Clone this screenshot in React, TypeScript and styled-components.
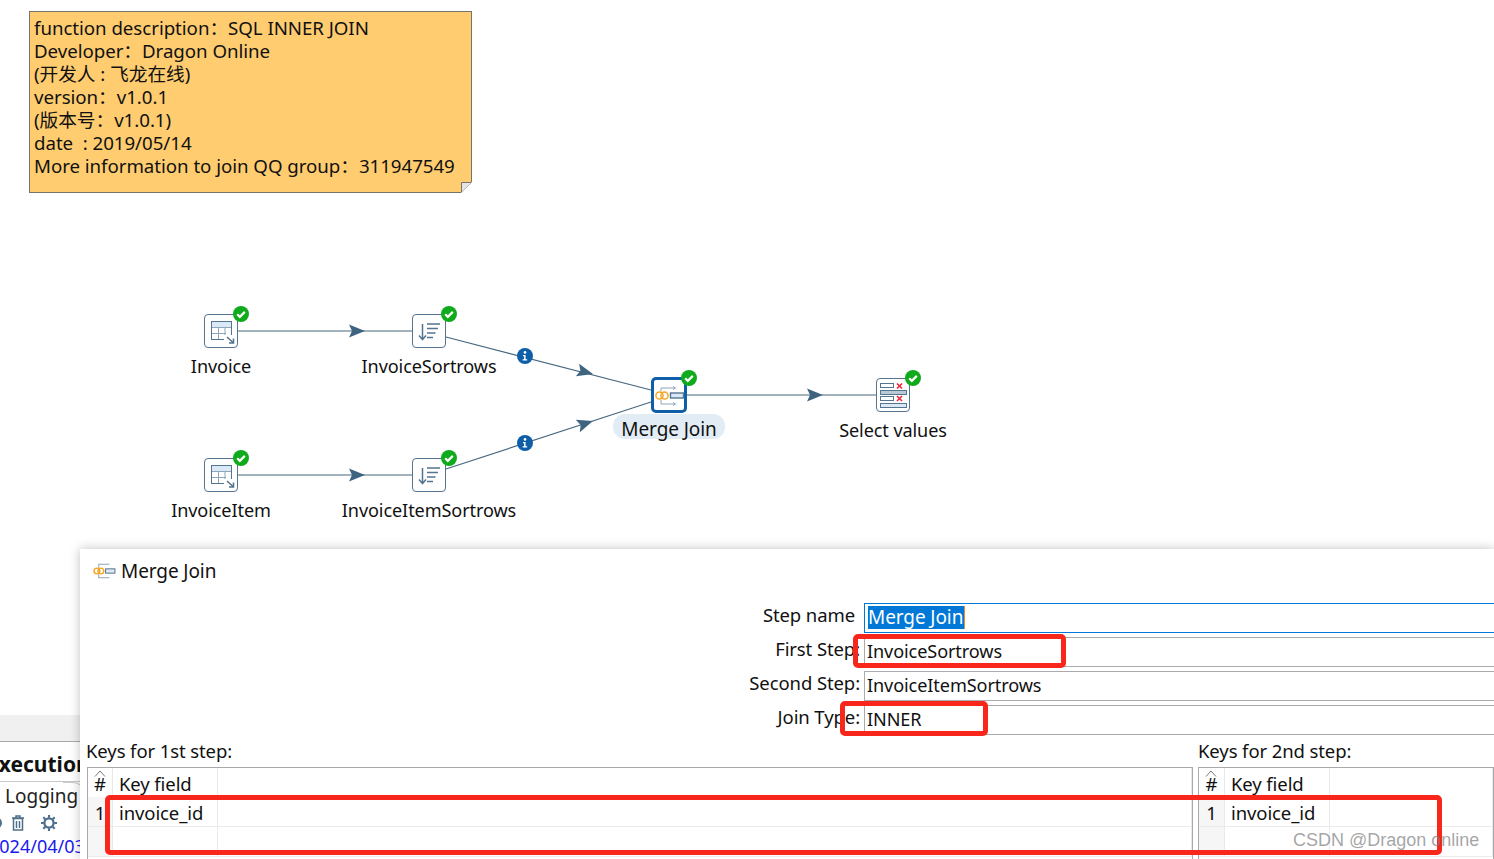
import React from "react";
import styled, { createGlobalStyle } from "styled-components";

const GlobalStyle = createGlobalStyle`
  html, body {
    margin: 0;
    background: #fff;
    overflow: hidden;
  }
  body {
    font-family: "Noto Sans", "Noto Sans CJK SC", sans-serif;
    color: #111;
  }
`;

const Page = styled.div`
  position: relative;
  width: 1494px;
  height: 859px;
  overflow: hidden;
  display: flex;
  flex-direction: column;
`;

/* ---------- canvas ---------- */

const Canvas = styled.div`
  position: relative;
  height: 549px;
  flex: none;
`;

const Note = styled.div`
  position: absolute;
  left: 29px;
  top: 11px;
  width: 443px;
  height: 182px;
  box-sizing: border-box;
  padding: 4px 0 0 4px;
  background: #ffcc70;
  border: 1px solid #77736b;
  font-size: 18.7px;
  line-height: 23px;
  letter-spacing: -0.04px;
  white-space: pre;
`;

const NoteFold = styled.svg`
  position: absolute;
  right: -1px;
  bottom: -1px;
  width: 11px;
  height: 11px;
`;

const Hops = styled.svg`
  position: absolute;
  inset: 0;
  width: 1494px;
  height: 549px;
`;

const Node = styled.div<{ $x: number; $y: number }>`
  position: absolute;
  left: ${(p) => p.$x}px;
  top: ${(p) => p.$y}px;
  width: 0;
  display: flex;
  flex-direction: column;
  align-items: center;
`;

const IconBox = styled.div<{ $active?: boolean }>`
  position: relative;
  flex: none;
  box-sizing: border-box;
  width: ${(p) => (p.$active ? 36 : 34)}px;
  height: ${(p) => (p.$active ? 36 : 34)}px;
  background: #fff;
  border: ${(p) => (p.$active ? "3px solid #0f5ea8" : "1px solid #55748f")};
  border-radius: ${(p) => (p.$active ? 5 : 4)}px;
  svg.glyph {
    position: absolute;
    left: ${(p) => (p.$active ? -1 : 0)}px;
    top: ${(p) => (p.$active ? -1 : 0)}px;
    width: 32px;
    height: 32px;
  }
`;

const Badge = styled.svg<{ $active?: boolean }>`
  position: absolute;
  right: ${(p) => (p.$active ? -13 : -12)}px;
  top: ${(p) => (p.$active ? -10 : -9)}px;
  width: 16px;
  height: 16px;
`;

const NodeLabel = styled.div<{ $active?: boolean }>`
  flex: none;
  margin-top: ${(p) => (p.$active ? 1 : 6)}px;
  padding: ${(p) => (p.$active ? "0 8px" : 0)};
  height: 25px;
  line-height: ${(p) => (p.$active ? 31 : 25)}px;
  border-radius: 12px;
  background: ${(p) => (p.$active ? "#e1ecf5" : "transparent")};
  font-size: ${(p) => (p.$active ? 19 : 18.1)}px;
  letter-spacing: -0.1px;
  white-space: nowrap;
`;

/* ---------- lower band ---------- */

const Lower = styled.div`
  flex: 1;
  display: flex;
  min-height: 0;
`;

const Behind = styled.div`
  flex: none;
  width: 80px;
  overflow: hidden;
  padding-top: 166px;
  white-space: nowrap;
`;

const BehindBar = styled.div`
  height: 26px;
  background: #f0f0f0;
  border-bottom: 1px solid #a9a9a9;
`;

const BehindTitle = styled.div`
  height: 39px;
  line-height: 44px;
  margin-left: -13px;
  font-size: 21px;
  font-weight: 700;
  border-bottom: 1px solid #c9c9c9;
`;

const BehindTab = styled.div`
  position: relative;
  height: 29px;
  line-height: 29px;
  padding-left: 5px;
  font-size: 19px;
  color: #222;
  &::after {
    content: "";
    position: absolute;
    right: -8px;
    top: 0;
    width: 24px;
    height: 20px;
    border-top: 1px solid #c9c9c9;
    border-right: 1px solid #c9c9c9;
    border-top-right-radius: 16px;
  }
`;

const BehindTools = styled.div`
  height: 24px;
  display: flex;
  align-items: center;
  gap: 8px;
  margin-left: -11px;
  color: #4d6f8c;
`;

const GearIcon = styled.svg`
  margin-left: 8px;
`;

const BehindDate = styled.div`
  margin-left: -11px;
  line-height: 22px;
  font-size: 18px;
  color: #1a1aee;
`;

const Dialog = styled.div`
  position: relative;
  flex: 1;
  min-width: 0;
  background: #fff;
  box-shadow: 0 0 10px rgba(0, 0, 0, 0.25);
  padding: 0 0 0 6px;
  overflow: visible;
`;

const TitleRow = styled.div`
  height: 43px;
  display: flex;
  align-items: center;
  gap: 5px;
  padding-left: 7px;
  font-size: 19px;
  letter-spacing: -0.1px;
`;

const Form = styled.div`
  margin-top: 11px;
  display: grid;
  grid-template-columns: 774px 1fr;
  column-gap: 4px;
  row-gap: 4px;
  font-size: 18.5px;
  letter-spacing: -0.1px;
`;

const FieldLabel = styled.div<{ $inset?: boolean }>`
  height: 30px;
  line-height: ${(p) => (p.$inset ? 23 : 24)}px;
  text-align: right;
  padding-right: ${(p) => (p.$inset ? 5 : 0)}px;
`;

const Field = styled.div<{ $focus?: boolean }>`
  box-sizing: border-box;
  height: 30px;
  line-height: 26px;
  font-size: 18.1px;
  padding-left: ${(p) => (p.$focus ? 3 : 2)}px;
  border: 1px solid ${(p) => (p.$focus ? "#0078d7" : "#ababab")};
  border-right: none;
`;

const Selected = styled.span`
  display: inline-block;
  height: 23px;
  line-height: 23px;
  margin-top: 2px;
  padding-right: 1px;
  font-size: 19px;
  background: #0078d7;
  border-right: 1px solid #f08a24;
  color: #fff;
  vertical-align: top;
`;

const Keys = styled.div`
  margin-top: 4px;
  display: grid;
  grid-template-columns: 1107px 1fr;
  column-gap: 5px;
  font-size: 18.5px;
  letter-spacing: -0.1px;
`;

const KeysLabel = styled.div`
  height: 28px;
  line-height: 24px;
  margin-right: -1px;
`;

const KeyTable = styled.div<{ $first?: boolean }>`
  box-sizing: border-box;
  height: 93px;
  margin-left: ${(p) => (p.$first ? 1 : 0)}px;
  border: 1px solid #a9a9a9;
  border-bottom: none;
  display: grid;
  grid-template-columns: ${(p) => (p.$first ? 25 : 26)}px 105px 1fr;
  grid-template-rows: 29px 30px 30px;
`;

const Cell = styled.div<{ $num?: boolean; $head?: boolean }>`
  position: relative;
  box-sizing: border-box;
  line-height: ${(p) => (p.$head ? 31 : 32)}px;
  padding-left: ${(p) => (p.$num ? 0 : 6)}px;
  text-align: ${(p) => (p.$num ? "center" : "left")};
  background: ${(p) => (p.$num && !p.$head ? "#f6f6f6" : "#fff")};
  border-right: 1px solid #e6ebf3;
  border-bottom: ${(p) => (p.$head ? "none" : "1px solid #ebebeb")};
`;

const SortMark = styled.svg`
  position: absolute;
  left: 6px;
  top: 2px;
  width: 12px;
  height: 7px;
`;

/* ---------- annotations on top of the screenshot ---------- */

const RedBox = styled.div<{ $x: number; $y: number; $w: number; $h: number }>`
  position: absolute;
  left: ${(p) => p.$x}px;
  top: ${(p) => p.$y}px;
  width: ${(p) => p.$w}px;
  height: ${(p) => p.$h}px;
  box-sizing: border-box;
  border: 5px solid #f9261c;
  border-radius: 5px;
`;

const Watermark = styled.div`
  position: absolute;
  left: 1293px;
  top: 827px;
  font-family: "Liberation Sans", sans-serif;
  font-size: 18px;
  line-height: 26px;
  color: rgba(125, 125, 125, 0.7);
  white-space: nowrap;
`;

/* ---------- icons ---------- */

const STEEL = "#55748f";

const TableGlyph = () => (
  <svg className="glyph" viewBox="0 0 32 32">
    <rect x="6.5" y="6.5" width="20" height="18" fill="#fff" stroke={STEEL} />
    <rect x="7" y="7" width="19" height="5" fill="#dbe9f6" />
    <path d="M7 12.5h19M7 18.5h14M13.5 12v12M20 12v8" stroke="#8fa5b8" fill="none" />
    <rect x="19" y="20" width="9" height="9" fill="#fff" />
    <path d="M22 22l6 5.5M28.5 23.5v4.5h-4.5" stroke={STEEL} strokeWidth="1.5" fill="none" />
  </svg>
);

const SortGlyph = () => (
  <svg className="glyph" viewBox="0 0 32 32">
    <path d="M9.5 9v15M6 20.5l3.5 4 3.5-4" stroke={STEEL} strokeWidth="1.5" fill="none" />
    <path d="M14 9h13M14 13.5h11M14 18h8.5M14 22.5h6" stroke={STEEL} strokeWidth="1.5" fill="none" />
  </svg>
);

const MergeGlyph = () => (
  <svg className="glyph" viewBox="0 0 32 32">
    <path d="M8 12.5V9h14M8 21v4h14" stroke="#8fa5b8" fill="none" />
    <path d="M20 7.5l2.5 1.5-2.5 1.5M20 23.5l2.5 1.5-2.5 1.5" stroke="#8fa5b8" fill="none" />
    <circle cx="6.5" cy="16.5" r="3.6" fill="none" stroke="#f5a623" strokeWidth="1.5" />
    <circle cx="11.5" cy="16.5" r="3.6" fill="none" stroke="#f5a623" strokeWidth="1.5" />
    <rect x="17.5" y="14" width="13" height="5" fill="#dbe9f6" stroke="#55748f" strokeWidth="1.4" />
  </svg>
);

const SelectGlyph = () => (
  <svg className="glyph" viewBox="0 0 32 32">
    <rect x="3.5" y="4.5" width="13" height="4" fill="#fff" stroke={STEEL} />
    <rect x="3.5" y="11.5" width="26" height="4" fill="#b9c9d6" stroke={STEEL} />
    <rect x="3.5" y="17.5" width="13" height="4" fill="#fff" stroke={STEEL} />
    <rect x="3.5" y="24.5" width="26" height="4" fill="#dbe9f6" stroke={STEEL} />
    <path d="M20 4.5l5 5M25 4.5l-5 5M20 17l5 5M25 17l-5 5" stroke="#f0243c" strokeWidth="1.6" fill="none" />
  </svg>
);

const CheckBadge = ({ active }: { active?: boolean }) => (
  <Badge $active={active} viewBox="0 0 16 16">
    <circle cx="8" cy="8" r="8" fill="#0fab1c" />
    <path d="M4.2 8.3l2.6 2.6 5-5" stroke="#fff" strokeWidth="2.2" fill="none" />
  </Badge>
);

const arrowHead = (tipX: number, tipY: number, angle: number) => (
  <path
    d="M-16 -6.5L0 0L-16 6.5L-13 0Z"
    fill="#3f6480"
    transform={`translate(${tipX} ${tipY}) rotate(${angle})`}
  />
);

const Info = ({ x, y }: { x: number; y: number }) => (
  <g transform={`translate(${x} ${y})`}>
    <circle r="8" fill="#0f5ea8" />
    <circle cy="-3.6" r="1.3" fill="#fff" />
    <path d="M-2 -1h2.6v4.2h1.6v1.3h-4.6v-1.3h1.5v-2.9h-1.1z" fill="#fff" />
  </g>
);

const Nodes = [
  { x: 221, y: 314, name: "Invoice", glyph: <TableGlyph /> },
  { x: 429, y: 314, name: "InvoiceSortrows", glyph: <SortGlyph /> },
  { x: 221, y: 458, name: "InvoiceItem", glyph: <TableGlyph /> },
  { x: 429, y: 458, name: "InvoiceItemSortrows", glyph: <SortGlyph /> },
  { x: 669, y: 377, name: "Merge Join", glyph: <MergeGlyph />, active: true },
  { x: 893, y: 378, name: "Select values", glyph: <SelectGlyph /> },
];

const KeyGrid = ({ first }: { first?: boolean }) => (
  <KeyTable $first={first}>
    <Cell $num $head>
      <SortMark viewBox="0 0 12 7">
        <path d="M1 6.5L6 1l5 5.5" stroke="#777" fill="none" />
      </SortMark>
      #
    </Cell>
    <Cell $head>Key field</Cell>
    <Cell $head />
    <Cell $num>1</Cell>
    <Cell>invoice_id</Cell>
    <Cell />
    <Cell $num />
    <Cell />
    <Cell />
  </KeyTable>
);

const App = () => {
  return (
    <Page>
      <GlobalStyle />
      <Canvas>
        <Hops viewBox="0 0 1494 549">
          <g stroke="#46687f" strokeWidth="1.2" fill="none">
            <path d="M238 331H412" />
            <path d="M238 475H412" />
            <path d="M446 337L651 390" />
            <path d="M446 469L651 402" />
            <path d="M687 395H876" />
          </g>
          {arrowHead(365, 331, 0)}
          {arrowHead(593, 374, 14.5)}
          {arrowHead(593, 421, -18)}
          {arrowHead(823, 395, 0)}
          {arrowHead(365, 475, 0)}
          <Info x={525} y={356} />
          <Info x={525} y={443} />
        </Hops>

        <Note>
          {"function description：SQL INNER JOIN\nDeveloper：Dragon Online\n(开发人 : 飞龙在线)\nversion：v1.0.1\n(版本号：v1.0.1)\ndate  : 2019/05/14\nMore information to join QQ group：311947549"}
          <NoteFold viewBox="0 0 11 11">
            <path d="M0.5 10.5V0.5H10.5Z" fill="#e4e4e4" stroke="#77736b" />
            <path d="M0 11H11V0Z" fill="#fff" />
          </NoteFold>
        </Note>

        {Nodes.map((n) => (
          <Node key={n.name} $x={n.x} $y={n.y}>
            <IconBox $active={n.active}>
              {n.glyph}
              <CheckBadge active={n.active} />
            </IconBox>
            <NodeLabel $active={n.active}>{n.name}</NodeLabel>
          </Node>
        ))}
      </Canvas>

      <Lower>
        <Behind>
          <BehindBar />
          <BehindTitle>Execution</BehindTitle>
          <BehindTab>Logging</BehindTab>
          <BehindTools>
            <svg width="14" height="16" viewBox="0 0 14 16">
              <circle cx="7" cy="8" r="5" fill="none" stroke="#4d6f8c" strokeWidth="2" />
            </svg>
            <svg width="14" height="16" viewBox="0 0 14 16">
              <path d="M1 3h12M5 3V1h4v2M2.5 3.5h9V15h-9zM5.5 6v7M8.5 6v7" fill="none" stroke="#4d6f8c" strokeWidth="1.5" />
            </svg>
            <GearIcon width="16" height="16" viewBox="0 0 18 18">
              <circle cx="9" cy="9" r="5.2" fill="none" stroke="#4d6f8c" strokeWidth="2.6" />
              <path d="M9 0v3M9 15v3M0 9h3M15 9h3M2.6 2.6l2.2 2.2M13.2 13.2l2.2 2.2M2.6 15.4l2.2-2.2M13.2 4.8l2.2-2.2" stroke="#4d6f8c" strokeWidth="2.4" />
            </GearIcon>
          </BehindTools>
          <BehindDate>2024/04/03</BehindDate>
        </Behind>

        <Dialog>
          <TitleRow>
            <svg width="23" height="18" viewBox="0 0 32 25">
              <path d="M8 8V3h15M8 17v5h15" stroke="#8fa5b8" fill="none" strokeWidth="1.4" />
              <circle cx="5.5" cy="12.5" r="4" fill="none" stroke="#f5a623" strokeWidth="2" />
              <circle cx="11" cy="12.5" r="4" fill="none" stroke="#f5a623" strokeWidth="2" />
              <rect x="17.5" y="9.5" width="13" height="6" fill="#dbe9f6" stroke="#55748f" strokeWidth="1.4" />
            </svg>
            Merge Join
          </TitleRow>

          <Form>
            <FieldLabel $inset>Step name</FieldLabel>
            <Field $focus>
              <Selected>Merge Join</Selected>
            </Field>
            <FieldLabel>First Step:</FieldLabel>
            <Field>InvoiceSortrows</Field>
            <FieldLabel>Second Step:</FieldLabel>
            <Field>InvoiceItemSortrows</Field>
            <FieldLabel>Join Type:</FieldLabel>
            <Field>INNER</Field>
          </Form>

          <Keys>
            <KeysLabel>Keys for 1st step:</KeysLabel>
            <KeysLabel>Keys for 2nd step:</KeysLabel>
            <KeyGrid first />
            <KeyGrid />
          </Keys>
        </Dialog>
      </Lower>

      <RedBox $x={853} $y={634} $w={213} $h={34} />
      <RedBox $x={840} $y={701} $w={148} $h={35} />
      <RedBox $x={105} $y={795} $w={1337} $h={60} />
      <Watermark>CSDN @Dragon online</Watermark>
    </Page>
  );
};

export default App;
